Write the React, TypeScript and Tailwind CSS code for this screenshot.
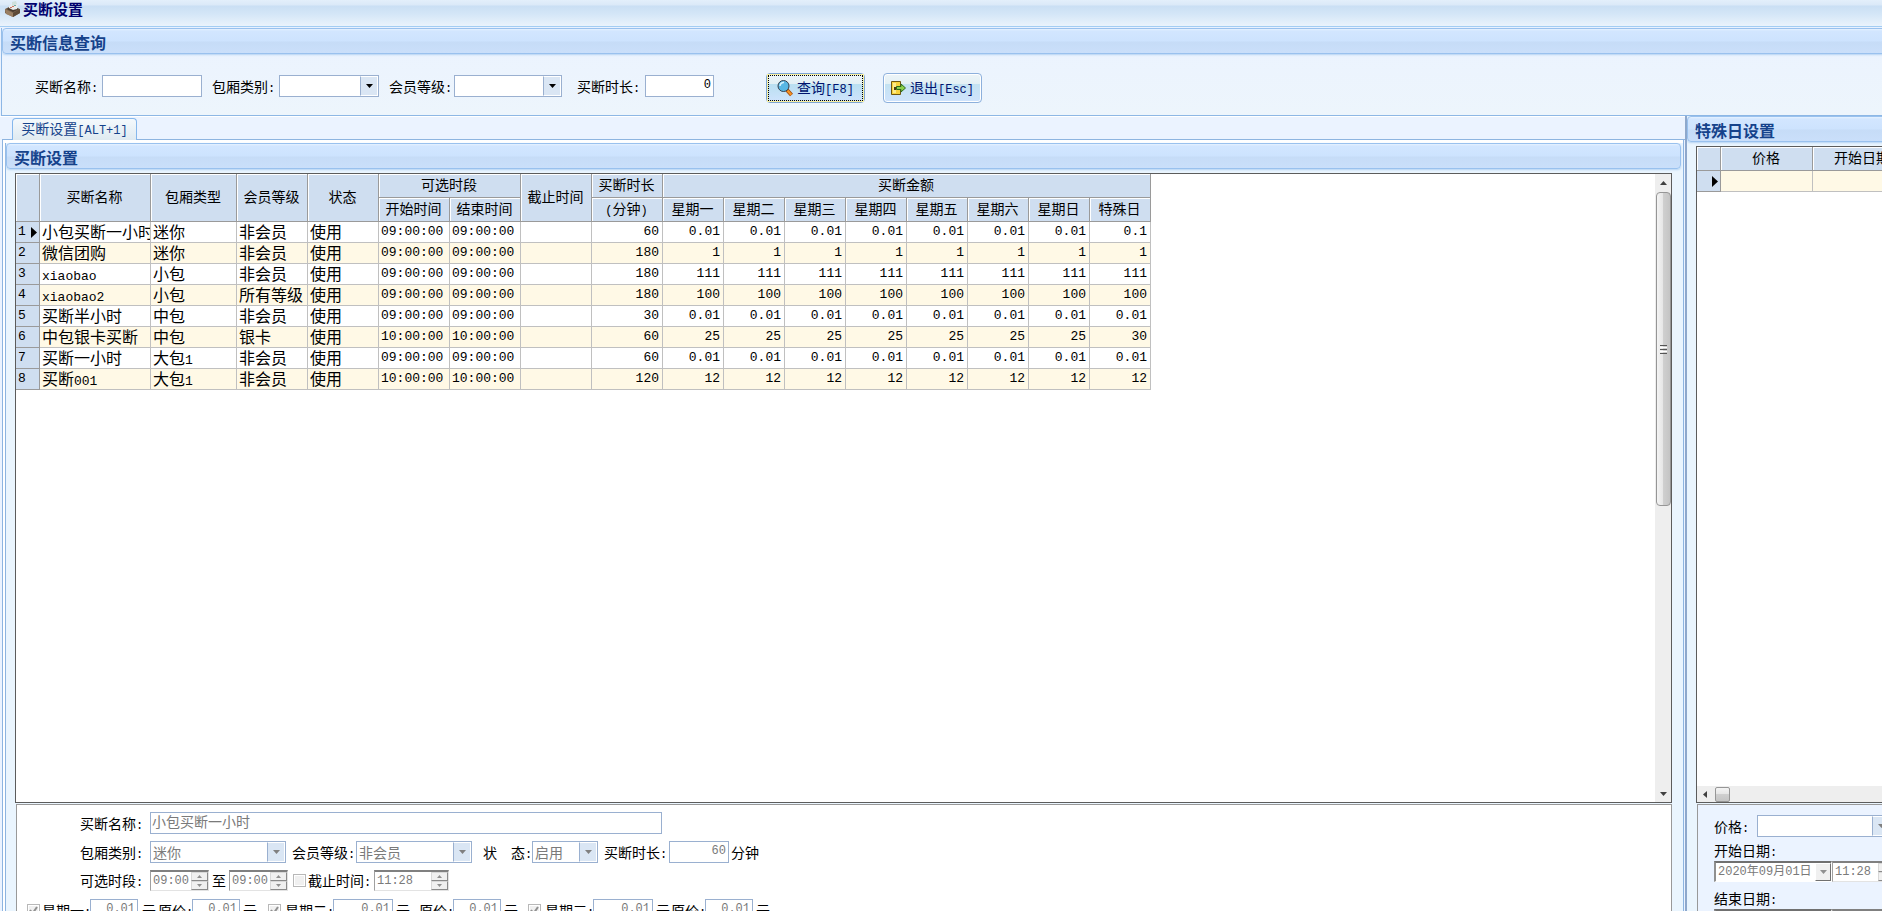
import type { ReactNode } from 'react';

const WEEK_DAYS = ['星期一', '星期二', '星期三', '星期四', '星期五', '星期六', '星期日', '特殊日'];

interface Buyout {
  name: string;
  room: string;
  level: string;
  status: string;
  start: string;
  end: string;
  minutes: string;
  prices: string[];
}

function samePrice(price: string, special = price) {
  return [price, price, price, price, price, price, price, special];
}

const BUYOUTS: Buyout[] = [
  { name: '小包买断一小时', room: '迷你', level: '非会员', status: '使用', start: '09:00:00', end: '09:00:00', minutes: '60', prices: samePrice('0.01', '0.1') },
  { name: '微信团购', room: '迷你', level: '非会员', status: '使用', start: '09:00:00', end: '09:00:00', minutes: '180', prices: samePrice('1') },
  { name: 'xiaobao', room: '小包', level: '非会员', status: '使用', start: '09:00:00', end: '09:00:00', minutes: '180', prices: samePrice('111') },
  { name: 'xiaobao2', room: '小包', level: '所有等级', status: '使用', start: '09:00:00', end: '09:00:00', minutes: '180', prices: samePrice('100') },
  { name: '买断半小时', room: '中包', level: '非会员', status: '使用', start: '09:00:00', end: '09:00:00', minutes: '30', prices: samePrice('0.01') },
  { name: '中包银卡买断', room: '中包', level: '银卡', status: '使用', start: '10:00:00', end: '10:00:00', minutes: '60', prices: samePrice('25', '30') },
  { name: '买断一小时', room: '大包1', level: '非会员', status: '使用', start: '09:00:00', end: '09:00:00', minutes: '60', prices: samePrice('0.01') },
  { name: '买断001', room: '大包1', level: '非会员', status: '使用', start: '10:00:00', end: '10:00:00', minutes: '120', prices: samePrice('12') },
];

const HEAD_CELL =
  'border-r border-b border-[#9a9a9a] bg-[#cfdef0] p-0 pr-px pb-[3px] text-sm font-normal leading-5 whitespace-nowrap shadow-[inset_1px_1px_0_#fff]';
const CELL = 'border-r border-b border-[#c0c0c0] p-0 pl-0.5 whitespace-nowrap';
const BODY_CELL = `${CELL} align-top leading-[18px]`;
const NUM_CELL = `${CELL} align-top font-[Liberation_Mono,monospace] text-[13px] leading-5`;
const TITLE_BG =
  'bg-[linear-gradient(#e6f2ff_0,#d2e6ff_2px,#cde3fe_12px,#c6dcf7_13px,#cadffa_100%)]';

// Latin runs are half the width of a Chinese glyph
function Mixed({ text, small }: { text: string; small?: boolean }) {
  return (
    <>
      {text.split(/([\x21-\x7e]+)/).map((part, i) =>
        i % 2 ? (
          <span
            key={i}
            className={`font-[Liberation_Mono,monospace] ${small ? 'text-xs leading-none' : 'text-[13px] leading-none'}`}
          >
            {part}
          </span>
        ) : (
          part
        )
      )}
    </>
  );
}

function Label({ text, htmlFor, className = '' }: { text: string; htmlFor?: string; className?: string }) {
  return (
    <label htmlFor={htmlFor} className={`shrink-0 whitespace-nowrap leading-5 text-black ${className}`}>
      <Mixed text={text} small />
    </label>
  );
}

function SectionTitle({ children, className = '' }: { children: ReactNode; className?: string }) {
  return (
    <h2
      className={`flex h-[26px] shrink-0 items-center rounded border border-[#99c1ee] pt-0.5 text-base font-bold leading-5 whitespace-nowrap text-[#15428b] shadow-[0_1px_2px_#b5d3f3] ${TITLE_BG} ${className}`}
    >
      {children}
    </h2>
  );
}

function TextBox({ id, value = '', className = '', numeric, disabled }: { id: string; value?: string; className?: string; numeric?: boolean; disabled?: boolean }) {
  return (
    <input
      id={id}
      type="text"
      defaultValue={value}
      disabled={disabled}
      className={`h-[22px] shrink-0 rounded-none border border-[#9ab0d0] bg-white outline-none ${
        numeric ? 'pr-0.5 pb-0.5 text-right font-[Liberation_Mono,monospace] text-xs' : 'pb-1 pl-px text-sm'
      } ${disabled ? 'text-[#7a7a7a]' : 'text-black'} ${className}`}
    />
  );
}

function DropDown({ id, value = '', className = '', disabled }: { id: string; value?: string; className?: string; disabled?: boolean }) {
  return (
    <span className={`flex h-[22px] shrink-0 border border-[#9ab0d0] bg-white ${className}`}>
      <select
        id={id}
        disabled={disabled}
        defaultValue={value}
        className="min-w-0 flex-1 appearance-none bg-white pl-0.5 text-sm leading-5 text-[#7a7a7a] opacity-100 outline-none"
      >
        <option value={value}>{value}</option>
      </select>
      <span className="flex w-[18px] shrink-0 items-center justify-center border border-l border-white border-l-[#9ab0d0] bg-[#dae6f4]">
        <svg width="7" height="4" viewBox="0 0 7 4" className={disabled ? 'fill-[#808080]' : 'fill-black'}>
          <path d="M0 0h7L3.500 4z" />
        </svg>
      </span>
    </span>
  );
}

function Spinner() {
  return (
    <span className="flex w-[17px] shrink-0 flex-col">
      {['M0 3h5L2.500 0z', 'M0 0h5L2.500 3z'].map((d, i) => (
        <button
          key={d}
          type="button"
          disabled
          aria-label={i ? '减少' : '增加'}
          className="flex flex-1 items-center justify-center border border-[#d8d8d8] border-r-[#8a8a8a] border-b-[#8a8a8a] bg-[#f0f0f0]"
        >
          <svg width="5" height="3" viewBox="0 0 5 3" className="fill-[#909090]">
            <path d={d} />
          </svg>
        </button>
      ))}
    </span>
  );
}

function TimeBox({ id, label, value, className = '' }: { id: string; label?: string; value: string; className?: string }) {
  return (
    <span
      className={`flex h-[21px] shrink-0 border border-t-2 border-[#e3e3e3] border-t-[#808080] border-l-[#a0a0a0] bg-white ${className}`}
    >
      <input
        id={id}
        aria-label={label}
        type="text"
        defaultValue={value}
        disabled
        className="min-w-0 flex-1 pl-0.5 font-[Liberation_Mono,monospace] text-xs text-[#7a7a7a]"
      />
      <Spinner />
    </span>
  );
}

function TickBox({ id, checked, className = '' }: { id: string; checked?: boolean; className?: string }) {
  return (
    <span className={`relative size-[13px] shrink-0 ${className}`}>
      <input
        id={id}
        type="checkbox"
        defaultChecked={checked}
        disabled
        className="block size-[13px] appearance-none border border-[#b8b8b8] bg-[#f0f0f0] shadow-[inset_0_0_0_1px_#fff]"
      />
      {checked && (
        <svg viewBox="0 0 13 13" className="pointer-events-none absolute inset-0 fill-none stroke-[#909090]" strokeWidth="2">
          <path d="M3 6l2.500 3.500L10 3" />
        </svg>
      )}
    </span>
  );
}

interface DayPriceProps {
  id: string;
  day: string;
  tickGap: string;
  priceWidth: string;
  unitGap: string;
  className?: string;
}

function DayPrice({ id, day, tickGap, priceWidth, unitGap, className = '' }: DayPriceProps) {
  return (
    <div className={`flex shrink-0 items-center ${className}`}>
      <TickBox id={`${id}-on`} checked className={tickGap} />
      <Label htmlFor={`${id}-on`} text={`${day}:`} className="w-12" />
      <TextBox id={`${id}-price`} value="0.01" numeric disabled className={priceWidth} />
      <Label htmlFor={`${id}-price`} text="元" className={unitGap} />
      <Label htmlFor={`${id}-origin`} text="原价:" className="w-[34px]" />
      <TextBox id={`${id}-origin`} value="0.01" numeric disabled className="w-12" />
      <span className="ml-[3px] leading-5">元</span>
    </div>
  );
}

function BoxIcon() {
  return (
    <svg width="16" height="17" viewBox="0 0 16 17">
      <path d="M0 9l6-3 9 3v4l-7 4-8-4z" fill="#75604c" />
      <path d="M0 9l8 4v4l-7-3z" fill="#9a7f63" />
      <path d="M8 13l7-4v4l-7 4z" fill="#5d4a38" />
      <path d="M2 9l5-3 7 3-6 3z" fill="#4a3c30" />
      <path d="M4 6l4-3 5 2-1 4-4 1-4-2z" fill="#e9ecec" />
      <path d="M7 2l4-1 1 3-5 2z" fill="#cfe0dc" />
      <path d="M7 6h2v1H7zM5 7h2v1H5z" fill="#cf7461" />
      <path d="M9 5h2v1H9z" fill="#6da7a0" />
    </svg>
  );
}

function SearchIcon() {
  return (
    <svg width="16" height="17" viewBox="0 0 16 17">
      <path d="M10 10l4.500 5" stroke="#a04b10" strokeWidth="4" />
      <path d="M10.500 10.500l3.800 4.300" stroke="#f79422" strokeWidth="2.200" />
      <circle cx="6.500" cy="6" r="5.500" fill="#58b7e4" stroke="#37424f" />
      <path d="M3 6a3.500 3.500 0 0 1 4-3.500" fill="none" stroke="#d6f3ff" strokeWidth="1.500" />
    </svg>
  );
}

function ExitIcon() {
  return (
    <svg width="15" height="14" viewBox="0 0 15 14">
      <path d="M.5.500h9v13h-9z" fill="#f8d33e" stroke="#6d5510" />
      <path d="M2 2h3v10H2z" fill="#fdeb8c" />
      <path d="M3 6h2v3H3z" fill="#4d3b0c" />
      <path d="M5.500 5.500H10V3l4.500 4L10 11V8.500H5.500z" fill="#8bd04a" stroke="#2c6b1c" />
    </svg>
  );
}

function RowArrow() {
  return (
    <svg width="6" height="11" viewBox="0 0 6 11" className="shrink-0">
      <path d="M0 0l6 5.500L0 11z" />
    </svg>
  );
}

function BuyoutTable() {
  return (
    <table className="w-[1135px] table-fixed border-separate border-spacing-0 text-black">
      <colgroup>
        <col className="w-6" />
        <col className="w-[111px]" />
        <col className="w-[86px]" />
        {[0, 1, 2, 3, 4, 5].map((i) => (
          <col key={i} className="w-[71px]" />
        ))}
        {WEEK_DAYS.map((day) => (
          <col key={day} className="w-[61px]" />
        ))}
      </colgroup>
      <thead>
        <tr className="h-6">
          <th rowSpan={2} className={HEAD_CELL} />
          <th rowSpan={2} className={HEAD_CELL}>买断名称</th>
          <th rowSpan={2} className={HEAD_CELL}>包厢类型</th>
          <th rowSpan={2} className={HEAD_CELL}>会员等级</th>
          <th rowSpan={2} className={HEAD_CELL}>状态</th>
          <th colSpan={2} className={HEAD_CELL}>可选时段</th>
          <th rowSpan={2} className={HEAD_CELL}>截止时间</th>
          <th className={HEAD_CELL}>买断时长</th>
          <th colSpan={8} className={HEAD_CELL}>买断金额</th>
        </tr>
        <tr className="h-6">
          <th className={HEAD_CELL}>开始时间</th>
          <th className={HEAD_CELL}>结束时间</th>
          <th className={HEAD_CELL}><Mixed text="(分钟)" small /></th>
          {WEEK_DAYS.map((day) => (
            <th key={day} className={HEAD_CELL}>{day}</th>
          ))}
        </tr>
      </thead>
      <tbody>
        {BUYOUTS.map((row, i) => (
          <tr key={row.name} className={`h-[21px] ${i % 2 ? 'bg-[#fff9e6]' : 'bg-white'}`}>
            <td className="border-r border-b border-[#9a9a9a] bg-[#cfdef0] p-0 pl-0.5 font-[Liberation_Mono,monospace] text-[13px] leading-5">
              <span className="flex items-center justify-between pr-0.5">
                {i + 1}
                {i === 0 && <RowArrow />}
              </span>
            </td>
            <td className={`${BODY_CELL} overflow-x-clip`}><Mixed text={row.name} /></td>
            <td className={BODY_CELL}><Mixed text={row.room} /></td>
            <td className={BODY_CELL}>{row.level}</td>
            <td className={BODY_CELL}>{row.status}</td>
            <td className={NUM_CELL}>{row.start}</td>
            <td className={NUM_CELL}>{row.end}</td>
            <td className={BODY_CELL} />
            <td className={`${NUM_CELL} pr-[3px] text-right`}>{row.minutes}</td>
            {row.prices.map((price, d) => (
              <td key={WEEK_DAYS[d]} className={`${NUM_CELL} pr-[3px] text-right`}>{price}</td>
            ))}
          </tr>
        ))}
      </tbody>
    </table>
  );
}

function VerticalScroll() {
  return (
    <div className="flex w-4 shrink-0 flex-col items-center bg-[#eeeeee]">
      <svg width="7" height="4" viewBox="0 0 7 4" className="my-[7px] shrink-0 fill-[#404040]">
        <path d="M0 4h7L3.500 0z" />
      </svg>
      <div className="flex h-1/2 w-[15px] flex-col items-center justify-center gap-px rounded-sm border border-[#969696] bg-[linear-gradient(90deg,#f4f4f4,#e6e6e6_45%,#cfcfcf_50%,#c4c4c4)]">
        <span className="h-px w-[7px] bg-[#555]" />
        <span className="h-px w-[7px] bg-white" />
        <span className="h-px w-[7px] bg-[#555]" />
        <span className="h-px w-[7px] bg-white" />
        <span className="h-px w-[7px] bg-[#555]" />
      </div>
      <svg width="7" height="4" viewBox="0 0 7 4" className="mt-auto mb-1.5 shrink-0 fill-[#404040]">
        <path d="M0 0h7L3.500 4z" />
      </svg>
    </div>
  );
}

function DateBox({ id, date, time }: { id: string; date: string; time: string }) {
  return (
    <div className="flex">
      <span className="flex h-[21px] w-[118px] shrink-0 border border-t-2 border-l-2 border-white border-t-[#707070] border-l-[#909090] bg-white">
        <input
          id={id}
          type="text"
          defaultValue={date}
          disabled
          className="min-w-0 flex-1 pl-0.5 font-[Liberation_Mono,'Noto_Sans_CJK_SC',sans-serif] text-xs text-[#7a7a7a]"
        />
        <span className="flex w-4 shrink-0 items-center justify-center border border-white border-r-[#707070] border-b-[#707070] bg-[#f0f0f0]">
          <svg width="7" height="4" viewBox="0 0 7 4" className="fill-[#909090]">
            <path d="M0 0h7L3.500 4z" />
          </svg>
        </span>
      </span>
      <TimeBox id={`${id}-time`} label="时间" value={time} className="w-16" />
    </div>
  );
}

export default function App() {
  return (
    <div className="flex h-screen flex-col overflow-hidden bg-[#ebf3ff] font-['Noto_Sans_CJK_SC',sans-serif] text-sm text-black">
      <header className="flex h-[27px] shrink-0 items-start gap-0.5 border-b border-[#a3cdf3] bg-[linear-gradient(#e3effb_0,#dbe9f8_5px,#cadff4_6px,#d4e6f7_14px,#eaf3fc_100%)] pl-[5px]">
        <BoxIcon />
        <h1 className="text-[15px] font-bold leading-[18px] text-[#00006e]">买断设置</h1>
      </header>

      <section className="mt-px ml-px flex h-[88px] shrink-0 flex-col border-b border-l border-[#8db7e5] bg-[linear-gradient(#ebf3ff,#edf5fc)]">
        <SectionTitle className="-mr-1 pl-[7px]">买断信息查询</SectionTitle>
        <form className="flex items-center pt-[21px] pl-[33px]">
          <Label htmlFor="q-name" text="买断名称:" className="w-[67px]" />
          <TextBox id="q-name" className="w-[100px]" />
          <Label htmlFor="q-room" text="包厢类别:" className="ml-2.5 w-[67px]" />
          <DropDown id="q-room" className="w-[100px]" />
          <Label htmlFor="q-level" text="会员等级:" className="ml-2.5 w-[65px]" />
          <DropDown id="q-level" className="w-[108px]" />
          <Label htmlFor="q-minutes" text="买断时长:" className="ml-[15px] w-[68px]" />
          <TextBox id="q-minutes" value="0" numeric className="w-[69px]" />
          <button
            type="button"
            className="-mt-0.5 -mb-1.5 ml-[52px] flex h-[30px] w-[99px] shrink-0 rounded-sm border border-[#7da5d6] bg-[linear-gradient(#edf5f8_0,#e3f0f4_10px,#b9dff0_10px,#cfe3fd_100%)] p-px text-[#00136e]"
          >
            <span className="flex h-full w-full items-center justify-center gap-1 border border-dotted border-black leading-5 whitespace-nowrap outline outline-[#f8f0a0]">
              <SearchIcon />
              <span className="pb-0.5"><Mixed text="查询[F8]" small /></span>
            </span>
          </button>
          <button
            type="button"
            className="-mt-0.5 -mb-1.5 ml-[18px] flex h-[30px] w-[99px] shrink-0 items-center justify-center gap-1 rounded-sm border border-[#8db0dc] bg-[linear-gradient(#edf5f8_0,#e3f0f4_10px,#c3e2f1_10px,#cfe3fd_100%)] leading-5 whitespace-nowrap text-[#00136e] shadow-[inset_0_0_0_1px_#fff]"
          >
            <ExitIcon />
            <span className="pb-0.5"><Mixed text="退出[Esc]" small /></span>
          </button>
        </form>
      </section>

      <main className="flex min-h-0 flex-1">
        <section className="flex min-w-0 flex-1 flex-col border-t border-white pl-0.5">
          <div className="flex h-[23px] shrink-0 items-end border-b border-[#8db4e0] pl-2.5">
            <button
              type="button"
              className="-mb-px h-[22px] w-[125px] rounded-t-sm border border-b-0 border-[#85b7ec] bg-[linear-gradient(#f4f9fc,#dfeaf1)] pb-[3px] text-sm leading-[18px] whitespace-nowrap text-[#15428b]"
            >
              <Mixed text="买断设置[ALT+1]" small />
            </button>
          </div>

          <div className="mr-px flex min-h-0 flex-1 flex-col border-x border-[#8db4e0] bg-white pt-[3px] pl-0.5">
            <div className="flex min-h-0 flex-1 flex-col border-l border-[#8db4e0] bg-[#eaf5fe] pr-0.5">
              <SectionTitle className="pl-[7px]">买断设置</SectionTitle>
              <div className="mt-1 mr-[9px] ml-[9px] flex min-h-0 flex-1 border border-[#5c5c5c] bg-white">
                <div className="min-w-0 flex-1 overflow-hidden text-base">
                  <BuyoutTable />
                </div>
                <VerticalScroll />
              </div>

              <form className="mt-px mr-[9px] ml-2.5 flex h-[107px] shrink-0 flex-col overflow-hidden border-x border-t border-[#999] bg-white pt-[7px]">
                <div className="flex h-[22px] shrink-0 items-center pl-[63px]">
                  <Label htmlFor="f-name" text="买断名称:" className="w-[70px]" />
                  <TextBox id="f-name" value="小包买断一小时" disabled className="w-[512px]" />
                </div>
                <div className="mt-[7px] flex h-[22px] shrink-0 items-center pl-[63px]">
                  <Label htmlFor="f-room" text="包厢类别:" className="w-[70px]" />
                  <DropDown id="f-room" value="迷你" disabled className="w-[136px]" />
                  <Label htmlFor="f-level" text="会员等级:" className="ml-1.5 w-16" />
                  <DropDown id="f-level" value="非会员" disabled className="w-[116px]" />
                  <Label htmlFor="f-status" text="状　态:" className="ml-[11px] w-[49px]" />
                  <DropDown id="f-status" value="启用" disabled className="w-[66px]" />
                  <Label htmlFor="f-minutes" text="买断时长:" className="ml-1.5 w-[65px]" />
                  <TextBox id="f-minutes" value="60" numeric disabled className="w-[60px]" />
                  <span className="ml-0.5 leading-5">分钟</span>
                </div>
                <div className="mt-1.5 flex h-[22px] shrink-0 items-center pl-[63px]">
                  <Label htmlFor="f-start" text="可选时段:" className="w-[70px]" />
                  <TimeBox id="f-start" value="09:00" className="w-[59px]" />
                  <Label htmlFor="f-end" text="至" className="mx-[3px]" />
                  <TimeBox id="f-end" value="09:00" className="w-[59px]" />
                  <TickBox id="f-deadline" className="ml-[5px]" />
                  <Label htmlFor="f-deadline" text="截止时间:" className="ml-0.5 w-[66px]" />
                  <TimeBox id="f-deadline-time" label="截止时间" value="11:28" className="w-[75px]" />
                </div>
                <div className="mt-2 flex h-[22px] shrink-0 items-center pl-2.5">
                  <DayPrice id="mon" day="星期一" tickGap="mr-0.5" priceWidth="w-12" unitGap="ml-1 mr-0.5" className="w-[241px]" />
                  <DayPrice id="tue" day="星期二" tickGap="mr-1" priceWidth="w-[60px]" unitGap="ml-[3px] mr-[9px]" className="w-[260px]" />
                  <DayPrice id="wed" day="星期三" tickGap="mr-1" priceWidth="w-[60px]" unitGap="ml-[3px] mr-px" />
                </div>
              </form>
            </div>
          </div>
        </section>

        <aside className="flex w-[197px] shrink-0 flex-col overflow-hidden border-l-2 border-[#8ea8cc] bg-[#eaf5fe]">
          <SectionTitle className="-mr-1 pl-[7px]">特殊日设置</SectionTitle>
          <div className="mt-1 ml-[9px] flex min-h-0 flex-1 flex-col overflow-hidden border border-r-0 border-[#5c5c5c] bg-white">
            <table className="w-[236px] table-fixed border-separate border-spacing-0 text-black">
              <colgroup>
                <col className="w-6" />
                <col className="w-[92px]" />
                <col className="w-[120px]" />
              </colgroup>
              <thead>
                <tr className="h-6">
                  <th className={HEAD_CELL} />
                  <th className={HEAD_CELL}>价格</th>
                  <th className={`${HEAD_CELL} pl-[21px] text-left`}>开始日期</th>
                </tr>
              </thead>
              <tbody>
                <tr className="h-[21px] bg-[#fff9e6]">
                  <td className="border-r border-b border-[#9a9a9a] bg-[#cfdef0] p-0 pr-0.5">
                    <span className="flex justify-end"><RowArrow /></span>
                  </td>
                  <td className={BODY_CELL} />
                  <td className={BODY_CELL} />
                </tr>
              </tbody>
            </table>
            <div className="mt-auto flex h-4 shrink-0 items-center bg-[#eeeeee] pl-1.5">
              <svg width="4" height="7" viewBox="0 0 4 7" className="mr-2 fill-[#404040]">
                <path d="M4 0v7L0 3.500z" />
              </svg>
              <span className="h-[15px] w-[15px] rounded-xs border border-[#969696] bg-[linear-gradient(#f4f4f4,#e6e6e6_45%,#cfcfcf_50%,#c4c4c4)]" />
            </div>
          </div>

          <form className="mt-px ml-2.5 flex h-[107px] shrink-0 flex-col overflow-hidden border-t border-l border-[#999] bg-[#ebf3ff] pt-2.5 pl-4">
            <div className="flex h-[22px] shrink-0 items-center">
              <Label htmlFor="s-price" text="价格:" className="w-[43px]" />
              <DropDown id="s-price" disabled className="w-[134px]" />
            </div>
            <Label htmlFor="s-start" text="开始日期:" className="mt-[3px] h-[21px]" />
            <DateBox id="s-start" date="2020年09月01日" time="11:28" />
            <Label htmlFor="s-end" text="结束日期:" className="mt-1.5 h-[21px]" />
            <DateBox id="s-end" date="2020年09月01日" time="11:28" />
          </form>
        </aside>
      </main>
    </div>
  );
}
